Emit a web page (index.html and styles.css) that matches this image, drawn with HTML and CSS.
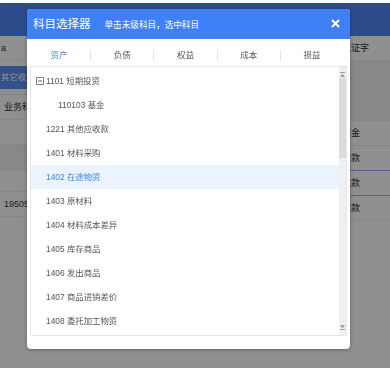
FILE: index.html
```html
<!DOCTYPE html>
<html>
<head>
    <meta charset="utf-8">
    <title>科目选择器</title>
    <link rel="stylesheet" href="styles.css">
</head>
<body>
    <div class="topbar"></div>
    <div class="navbar"></div>
    <div class="content">
        <div class="left-pane">
            <div class="row head">a</div>
            <div class="row tall"><span class="tag">其它收入</span></div>
            <div class="row">业务科目</div>
            <div class="row"></div>
            <div class="row hover"></div>
            <div class="row short"></div>
            <div class="row">19505311</div>
        </div>
        <div class="right-pane">
            <div class="row head">凭证字</div>
            <div class="row block"></div>
            <div class="row">基金</div>
            <div class="row selected">收款</div>
            <div class="row selected">收款</div>
            <div class="row">收款</div>
        </div>
    </div>

    <div class="mask"></div>

    <div class="modal">
        <div class="modal-header">
            <span class="modal-title">科目选择器</span>
            <span class="modal-tip">单击末级科目，选中科目</span>
            <span class="modal-close">
                <svg width="9" height="9" viewBox="0 0 9 9"><path d="M1 1L8 8M8 1L1 8" stroke="#fff" stroke-width="2"/></svg>
            </span>
        </div>
        <div class="tabs">
            <div class="tab active">资产</div>
            <div class="tab">负债</div>
            <div class="tab">权益</div>
            <div class="tab">成本</div>
            <div class="tab">损益</div>
        </div>
        <div class="list-box">
            <ul class="subject-list">
                <li class="parent"><svg class="fold" width="8" height="8" viewBox="0 0 8 8"><rect x="0.5" y="0.5" width="7" height="7" fill="none" stroke="#888"/><path d="M2 4H6" stroke="#666"/></svg>1101 短期投资</li>
                <li class="child">110103 基金</li>
                <li>1221 其他应收款</li>
                <li>1401 材料采购</li>
                <li class="current">1402 在途物资</li>
                <li>1403 原材料</li>
                <li>1404 材料成本差异</li>
                <li>1405 库存商品</li>
                <li>1406 发出商品</li>
                <li>1407 商品进销差价</li>
                <li>1408 委托加工物资</li>
            </ul>
            <div class="scrollbar">
                <div class="scroll-btn">
                    <svg width="5" height="5" viewBox="0 0 5 5"><path d="M0 0h5v1H0zM2.5 1.5L5 5H0z" fill="#a0a0a0"/></svg>
                </div>
                <div class="scroll-track"><div class="scroll-thumb"></div></div>
                <div class="scroll-btn">
                    <svg width="5" height="5" viewBox="0 0 5 5"><path d="M0 4h5v1H0zM2.5 3.5L5 0H0z" fill="#a0a0a0"/></svg>
                </div>
            </div>
        </div>
    </div>
</body>
</html>
```

FILE: styles.css
```css
/* page underneath the dialog */
body {
    margin: 0;
    font-family: "Liberation Sans", "Noto Sans CJK SC", sans-serif;
    background-color: #fff;
    color: #333;
}

.topbar {
    height: 3px;
    background-color: #fff;
}

.navbar {
    height: 33px;
    background-color: #4d86f7;
}

.content {
    display: flex;
    justify-content: space-between;
}

.left-pane {
    width: 60px;
}

.right-pane {
    width: 50px;
}

.row {
    height: 25px;
    line-height: 25px;
    font-size: 9px;
    border-bottom: 1px solid #ececec;
    box-sizing: border-box;
    white-space: nowrap;
    overflow: hidden;
}

.left-pane .row {
    padding-left: 4px;
}

.left-pane .row.head {
    padding-left: 1px;
}

.right-pane .row {
    padding-left: 2px;
}

.row.tall {
    height: 34px;
    padding: 4px 0 0 0;
}

.row.hover {
    background-color: #f2f2f2;
}

.row.short {
    height: 22px;
}

.row.block {
    height: 60px;
    background-color: #f2f2f2;
}

.row.selected {
    border-bottom-color: #8fb3f5;
}

.tag {
    display: inline-block;
    height: 23px;
    line-height: 23px;
    padding: 0 1px;
    background-color: #5a8ff5;
    color: #fff;
    font-size: 8.4px;
}

.mask {
    position: fixed;
    top: 3px;
    left: 0;
    right: 0;
    bottom: 0;
    background-color: rgba(0, 0, 0, 0.44);
}

/* dialog */
.modal {
    position: fixed;
    top: 9px;
    left: 27px;
    width: 323px;
    height: 340px;
    display: flex;
    flex-direction: column;
    background-color: #fff;
    border-radius: 4px;
    box-shadow: 0 1px 4px rgba(0, 0, 0, 0.3);
    overflow: hidden;
}

.modal-header {
    height: 30px;
    flex: none;
    display: flex;
    align-items: baseline;
    padding: 0 10px 0 6px;
    background-color: #4080f6;
    color: #fff;
    line-height: 30px;
}

.modal-title {
    font-size: 11.5px;
}

.modal-tip {
    margin-left: 14px;
    font-size: 8.6px;
}

.modal-close {
    margin-left: auto;
    align-self: center;
    height: 9px;
    margin-top: -2px;
}

.modal-close svg {
    display: block;
}

.tabs {
    flex: none;
    display: flex;
    padding: 11px 7px 5px 1px;
}

.tab {
    flex: 1;
    height: 11px;
    line-height: 11px;
    text-align: center;
    font-size: 8.5px;
    color: #555;
}

.tab + .tab {
    border-left: 1px solid #e4e4e4;
}

.tab.active {
    color: #4a8af4;
}

.list-box {
    flex: 1;
    display: flex;
    margin: 0 3px 13px 3px;
    border: 1px solid #e1e8f1;
    overflow: hidden;
}

.subject-list {
    flex: 1;
    margin: 0;
    padding: 2px 0 0 0;
    list-style: none;
}

.subject-list li {
    height: 24px;
    line-height: 24px;
    padding-left: 15px;
    font-size: 8.4px;
    color: #555;
    white-space: nowrap;
    cursor: pointer;
}

.subject-list li.parent {
    padding-left: 5px;
}

.subject-list li.child {
    padding-left: 27px;
}

.subject-list li.current {
    background-color: #ebf3fe;
    color: #3a86f2;
}

.fold {
    vertical-align: -1px;
    margin-right: 2px;
}

/* thin grey scrollbar */
.scrollbar {
    width: 7px;
    display: flex;
    flex-direction: column;
    background-color: #f0f0f0;
}

.scroll-btn {
    height: 10px;
    display: flex;
    align-items: center;
    justify-content: center;
}

.scroll-btn:first-child {
    align-items: flex-end;
}

.scroll-btn:last-child {
    align-items: flex-start;
}

.scroll-track {
    flex: 1;
    padding-top: 1px;
}

.scroll-thumb {
    height: 80px;
    background-color: #dcdcdc;
}
```
